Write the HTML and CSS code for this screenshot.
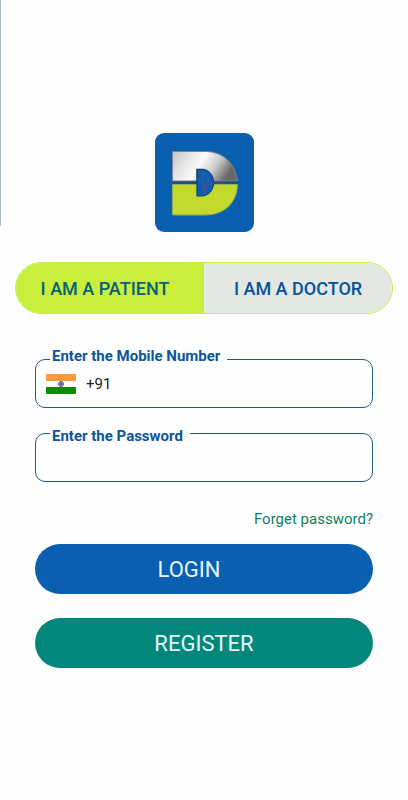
FILE: index.html
```html
<!DOCTYPE html>
<html lang="en">
<head>
  <meta charset="UTF-8">
  <meta name="viewport" content="width=device-width, initial-scale=1.0">
  <title>Login</title>
  <link rel="stylesheet" href="styles.css">
</head>
<body>
  <main class="page">
    <svg class="logo" viewBox="0 0 99 99" role="img" aria-label="D logo">
      <defs>
        <linearGradient id="silver" x1="0" y1="0" x2="1" y2="0.3">
          <stop offset="0" stop-color="#c4c4c4"/>
          <stop offset="0.25" stop-color="#e2e2e2"/>
          <stop offset="0.5" stop-color="#fafafa"/>
          <stop offset="0.75" stop-color="#c8c8c8"/>
          <stop offset="1" stop-color="#686868"/>
        </linearGradient>
      </defs>
      <rect width="99" height="99" rx="9" fill="#0b5fb0"/>
      <path d="M17.500 18.500H50C68 18.500 80 30 82.500 48H58.500C57.500 40.500 53 36 47 36H41.500V48H17.500Z" fill="url(#silver)" stroke="#7d8993"/>
      <path d="M17.500 51.500H41.500V63H47C53 63 57.500 59 58.500 51.500H82.500C82 70 69 82 50 82H17.500Z" fill="#c3d92e" stroke="#8dab62"/>
      <path d="M17 49.500H83" stroke="#2d4a63" stroke-width="2"/>
      <path d="M42 36.500H46C54 36.500 58.500 42 58.500 49.500S54 63 46 63H42Z" fill="#0b5fb0" stroke="#173d68"/>
      <path d="M43 50H46L48 40L50 61L53 46L55 52L58 50H69" fill="none" stroke="#5a4a8c"/>
    </svg>

    <div class="role-switch">
      <button type="button" class="role patient active" aria-pressed="true">I AM A PATIENT</button>
      <button type="button" class="role doctor" aria-pressed="false">I AM A DOCTOR</button>
    </div>

    <form class="login-form">
      <fieldset class="field">
        <legend class="raised"><label for="mobile">Enter the Mobile Number</label></legend>
        <div class="field-row">
          <svg class="flag" viewBox="0 0 30 20" role="img" aria-label="India">
            <rect width="30" height="20" rx="1" fill="#fff"/>
            <path d="M1 0H29Q30 0 30 1V7H0V1Q0 0 1 0Z" fill="#fb9a3c"/>
            <path d="M0 13H30V19Q30 20 29 20H1Q0 20 0 19Z" fill="#128807"/>
            <circle cx="15" cy="10" r="2.500" fill="#c9cbdc" stroke="#35356b" stroke-width="0.800"/>
            <path d="M12.500 10H17.500M15 7.500V12.500M13.200 8.200L16.800 11.800M16.800 8.200L13.200 11.800" stroke="#35356b" stroke-width="0.400"/>
            <circle cx="15" cy="10" r="0.800" fill="#22225a"/>
          </svg>
          <input type="tel" id="mobile" value="+91">
        </div>
      </fieldset>

      <fieldset class="field">
        <legend class="lowered"><label for="password">Enter the Password</label></legend>
        <div class="field-row">
          <input type="password" id="password">
        </div>
      </fieldset>

      <a href="#" class="forget">Forget password?</a>

      <button type="submit" class="btn login">LOGIN</button>
      <button type="button" class="btn register">REGISTER</button>
    </form>
  </main>
</body>
</html>
```

FILE: styles.css
```css
/* Global Styles */
* {
  box-sizing: border-box;
}

body {
  margin: 0;
  font-family: Roboto, sans-serif;
  background: #fefefe linear-gradient(#a9c0c6, #a9c0c6) no-repeat left top / 1px 226px;
}

.page {
  display: flex;
  flex-direction: column;
  align-items: center;
  padding: 133px 15px 32px;
}

.logo {
  width: 99px;
  height: 99px;
}

/* Patient / Doctor switch */
.role-switch {
  display: flex;
  width: 100%;
  height: 52px;
  margin-top: 30px;
  border: 1px solid #c9ea48;
  border-radius: 26px;
  overflow: hidden;
}

.role {
  width: 50%;
  padding: 0;
  border: none;
  background: #e3e8e2;
  color: #06529c;
  font-family: inherit;
  font-size: 18px;
  font-weight: 500;
  cursor: pointer;
}

.role.patient {
  padding-right: 10px;
}

.role.active {
  background: #c9ee3c;
  color: #07607a;
}

/* Login Form */
.login-form {
  display: flex;
  flex-direction: column;
  width: 100%;
  padding: 0 20px;
  margin-top: 32px;
}

.field {
  min-width: 0;
  margin: 0 0 12px;
  padding: 0 10px;
  border: 1px solid #1c5a8a;
  border-radius: 10px;
}

.field legend {
  margin-left: 4px;
  padding: 0 7px 0 2px;
  color: #0a559c;
  font-size: 15px;
  font-weight: 700;
  line-height: 20px;
}

/* The two labels sit on either side of the border line */
.field legend.raised {
  padding-bottom: 6px;
}

.field legend.lowered {
  padding-top: 6px;
}

.field-row {
  display: flex;
  align-items: center;
  gap: 10px;
  height: 35px;
  padding-bottom: 11px;
}

.flag {
  width: 30px;
  height: 20px;
}

.field input {
  flex: 1;
  min-width: 0;
  padding: 0;
  border: none;
  outline: none;
  background: transparent;
  color: #222;
  font-family: inherit;
  font-size: 15px;
}

.forget {
  align-self: flex-end;
  margin: 15px 0;
  color: #0c8262;
  font-size: 15px;
  line-height: 20px;
  text-decoration: none;
}

.btn {
  height: 50px;
  margin-bottom: 24px;
  border: none;
  border-radius: 25px;
  color: #e4f8fb;
  font-family: inherit;
  font-size: 22px;
  cursor: pointer;
}

.btn.login {
  padding-right: 36px;
  background: #0b5fb0;
}

.btn.register {
  background: #03877b;
}
```
